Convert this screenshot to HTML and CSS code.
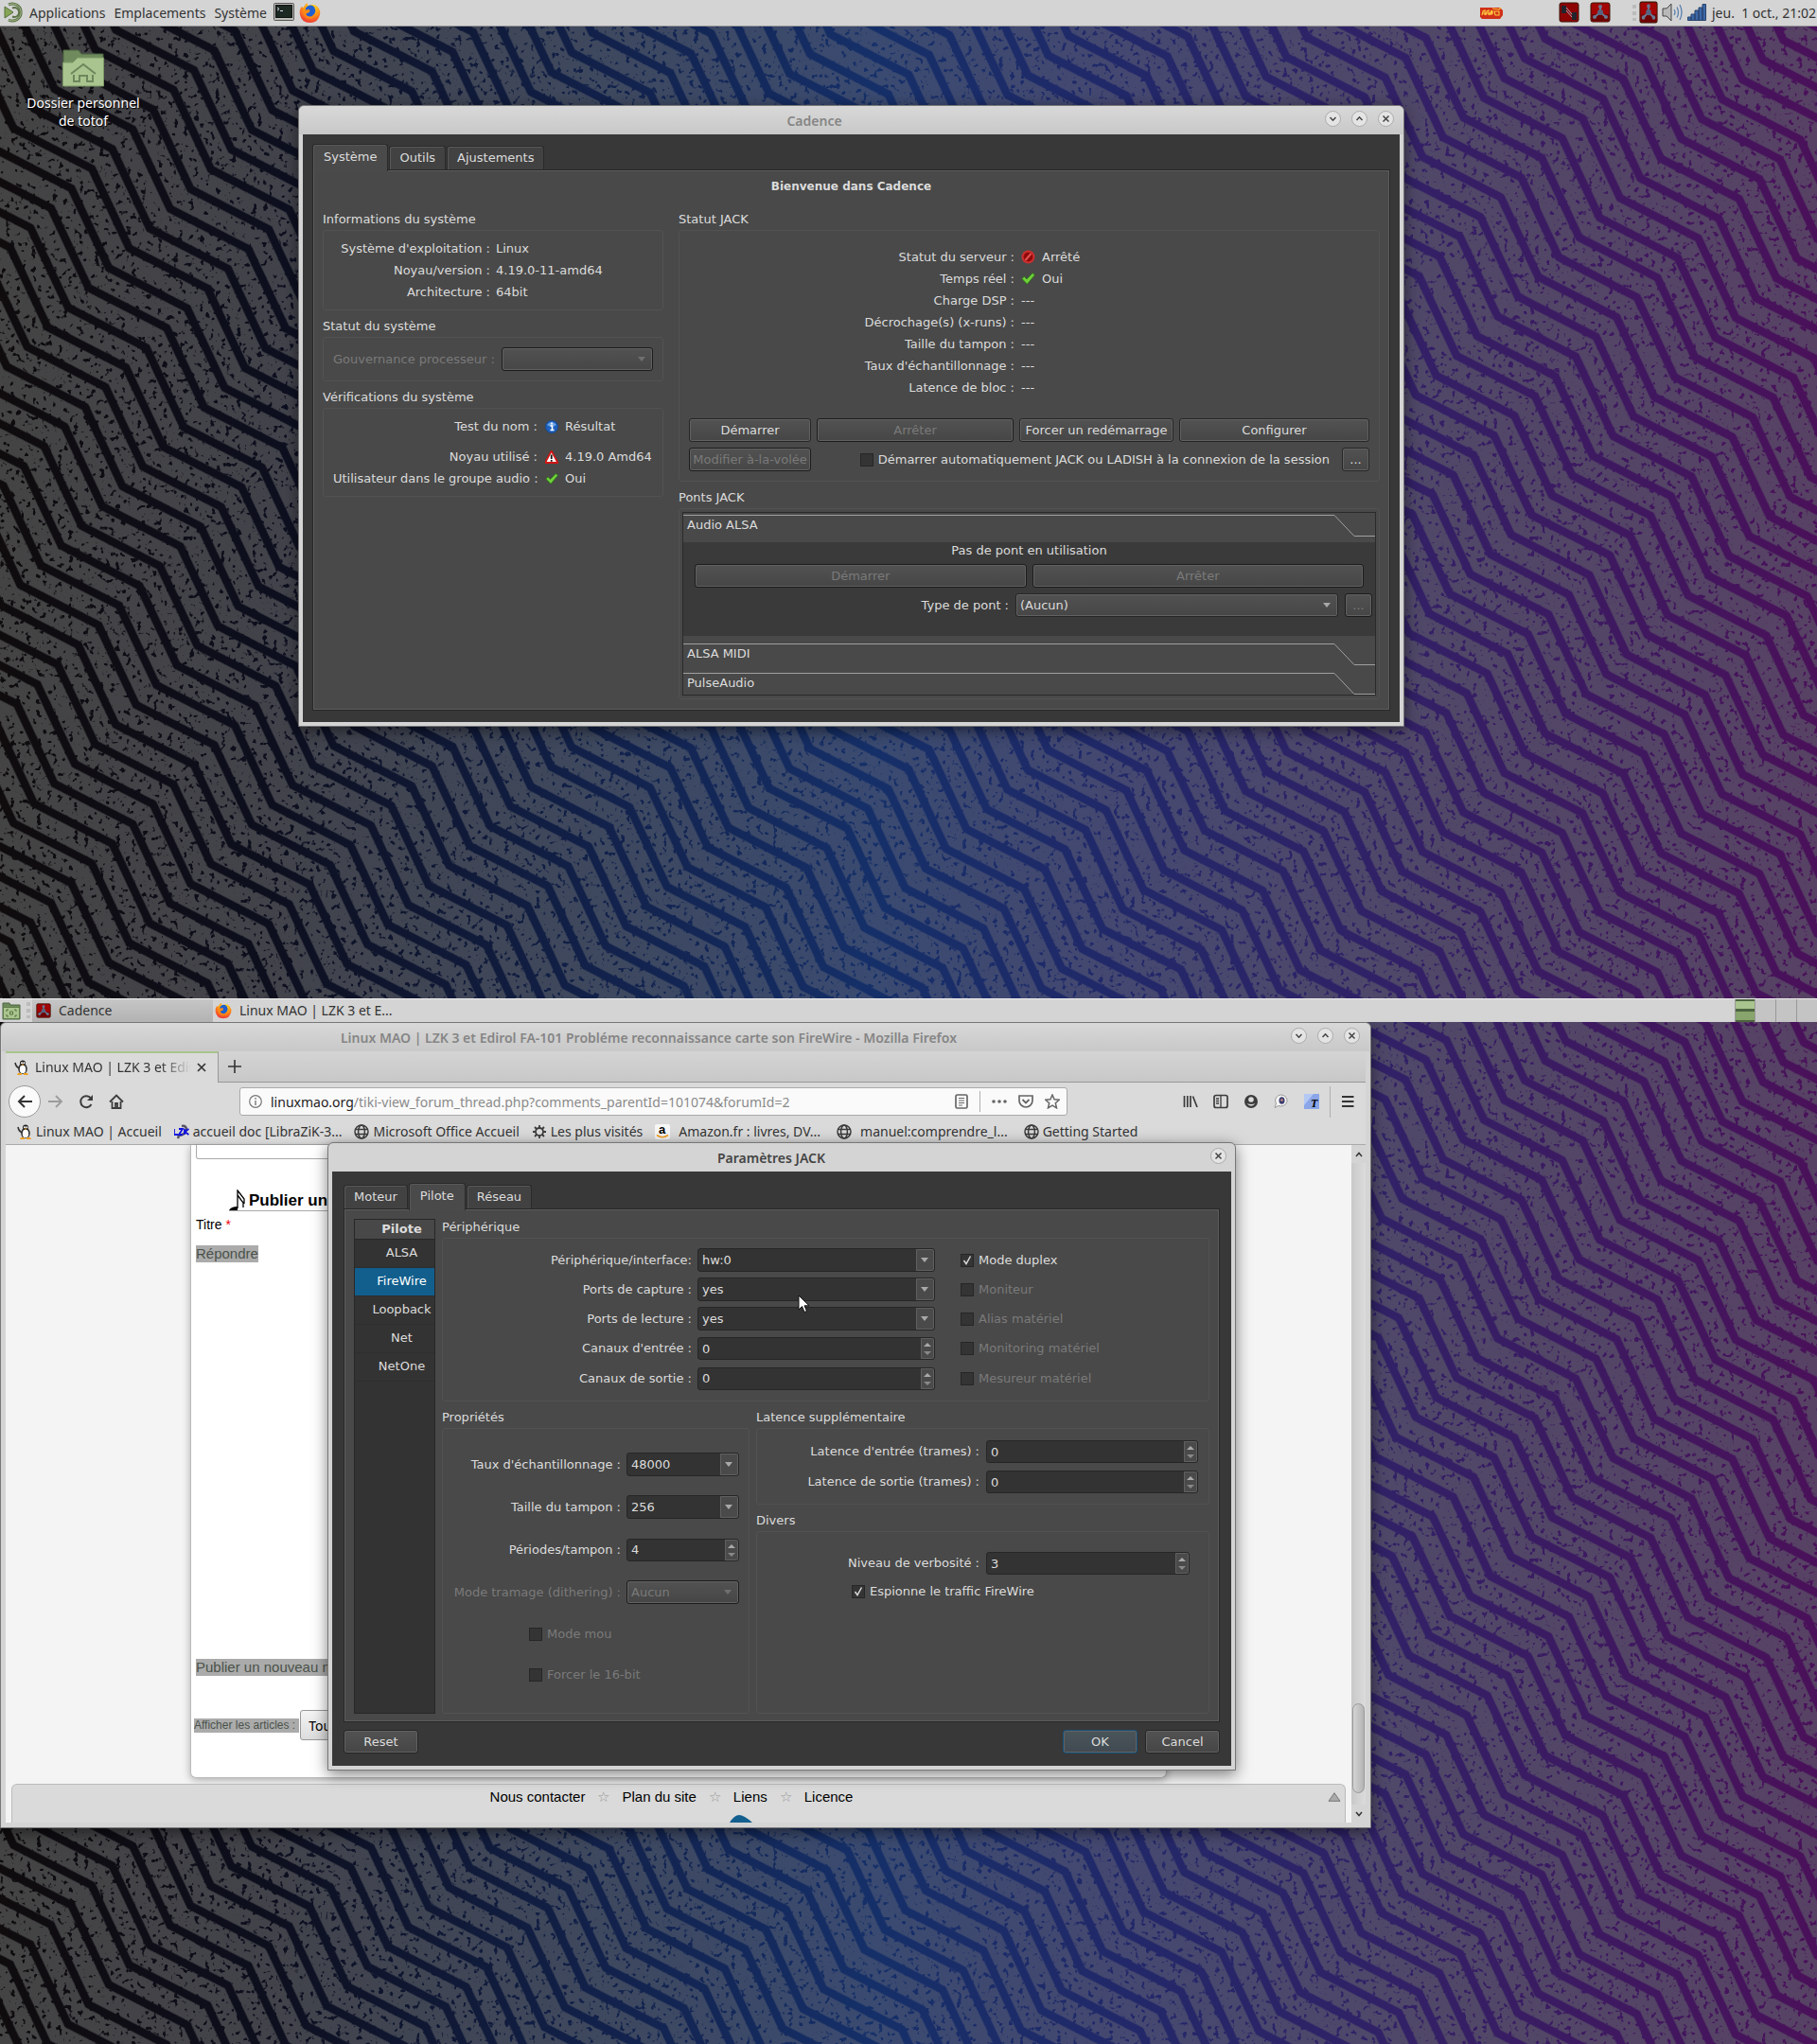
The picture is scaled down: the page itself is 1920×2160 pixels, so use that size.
FILE: index.html
```html
<!DOCTYPE html>
<html lang="fr">
<head>
<meta charset="utf-8">
<title>Bureau MATE</title>
<link rel="stylesheet" href="styles.css">
</head>
<body>
<svg class="defs" aria-hidden="true">
  <defs>
    <linearGradient id="ink" x1="0" y1="0" x2="1" y2="0">
      <stop offset="0" stop-color="#080406"/><stop offset=".15" stop-color="#060818"/><stop offset=".33" stop-color="#0c1c48"/>
      <stop offset=".48" stop-color="#102c68"/><stop offset=".62" stop-color="#1d2468"/><stop offset=".78" stop-color="#2f1b66"/><stop offset="1" stop-color="#480a58"/>
    </linearGradient>
    <linearGradient id="paint" x1="0" y1="0" x2="1" y2="0">
      <stop offset="0" stop-color="#444444"/><stop offset=".15" stop-color="#42434a"/><stop offset=".33" stop-color="#3e485e"/>
      <stop offset=".48" stop-color="#3a4a70"/><stop offset=".62" stop-color="#454870"/><stop offset=".78" stop-color="#504868"/><stop offset="1" stop-color="#574264"/>
    </linearGradient>
    <pattern id="zig" width="176" height="30" patternUnits="userSpaceOnUse" patternTransform="translate(18 10) rotate(46)">
      <g fill="none" stroke="#fff" stroke-width="20">
        <path d="M-88 -45 L0 -75 L88 -45 L176 -75 L264 -45"/><path d="M-88 -15 L0 -45 L88 -15 L176 -45 L264 -15"/>
        <path d="M-88 15 L0 -15 L88 15 L176 -15 L264 15"/><path d="M-88 45 L0 15 L88 45 L176 15 L264 45"/>
        <path d="M-88 75 L0 45 L88 75 L176 45 L264 75"/>
      </g>
    </pattern>
    <filter id="grit" x="0" y="0" width="1" height="1">
      <feTurbulence type="fractalNoise" baseFrequency=".18" numOctaves="2" seed="4" result="n"/>
      <feColorMatrix in="n" type="matrix" values="0 0 0 0 1  0 0 0 0 1  0 0 0 0 1  -10 0 0 0 7" result="m"/>
      <feComposite in="SourceGraphic" in2="m" operator="in"/>
    </filter>
    <mask id="stripes"><rect width="1920" height="1080" fill="url(#zig)" filter="url(#grit)"/></mask>
    <symbol id="wall" viewBox="0 0 1920 1080" preserveAspectRatio="xMidYMid slice">
      <rect width="1920" height="1080" fill="url(#ink)"/>
      <rect width="1920" height="1080" fill="url(#paint)" opacity=".12"/>
      <rect width="1920" height="1080" fill="url(#paint)" mask="url(#stripes)"/>
    </symbol>
    <radialGradient id="foxg" cx=".6" cy=".2" r=".9"><stop offset="0" stop-color="#ffe226"/><stop offset=".5" stop-color="#ff9116"/><stop offset="1" stop-color="#e8203c"/></radialGradient>
    <symbol id="fox" viewBox="0 0 24 24">
      <path d="M3 5 Q4 7 5 6 Q6 3 9 1 Q9 4 11 4 Q17 1 21 6 Q24 10 23 14 Q21 23 12 23 Q3 23 1 14 Q0 9 3 5Z" fill="url(#foxg)"/>
      <path d="M9 5 Q14 2 17 6 Q20 12 14 16 Q9 17 7 13 L12 11 L7 9 Q7 6 9 5Z" fill="#1f5fd0"/>
      <path d="M7 9 L11 8 L12 10 L10 12 Q7 12 8 15 Q12 19 17 14 Q15 20 9 18 Q4 15 5 10Z" fill="#ff8a14"/>
    </symbol>
    <symbol id="cad" viewBox="0 0 22 22">
      <rect x="1" y="1" width="20" height="20" rx="2" fill="#a30505" stroke="#3a1608"/><path d="M2 13 H20 V20 H2Z" fill="#6d0202"/>
      <path d="M11 11 V5 M11 11 L5 16 M11 11 L17 16" stroke="#6a7892" stroke-width="2"/><circle cx="11" cy="11" r="3" fill="#566480"/><circle cx="11" cy="5" r="2" fill="#6a7892"/><circle cx="5" cy="16" r="2" fill="#6a7892"/><circle cx="17" cy="16" r="2" fill="#6a7892"/>
    </symbol>
    <symbol id="tux" viewBox="0 0 16 16">
      <path d="M1 3 Q2 8 6 9" stroke="#333" stroke-width="1.600" fill="none"/><ellipse cx="9" cy="9.500" rx="4.800" ry="5.500" fill="#333"/><circle cx="9" cy="3.600" r="3" fill="#222"/><ellipse cx="9" cy="10" rx="3.200" ry="4.300" fill="#fff"/><circle cx="8" cy="3.200" r="1" fill="#fff"/><circle cx="10.300" cy="3.200" r="1" fill="#fff"/><path d="M7.500 4.600 H10.600 L9 6Z" fill="#f0a020"/><path d="M4 14 H8 V16 H3Z M10 14 H14 L15 16 H10Z" fill="#f0a020"/>
    </symbol>
    <symbol id="globe" viewBox="0 0 16 16"><g fill="none" stroke="#3c3c3c" stroke-width="1.5"><circle cx="8" cy="8" r="7"/><ellipse cx="8" cy="8" rx="3.4" ry="7"/><path d="M1.5 5.5 H14.5 M1.5 10.5 H14.5"/></g></symbol>
    <symbol id="down" viewBox="0 0 17 17"><circle cx="8.500" cy="8.500" r="8" fill="#e4e4e4" stroke="#aaa"/><path d="M5.500 7 L8.500 10.200 L11.500 7" fill="none" stroke="#444" stroke-width="1.500"/></symbol>
    <symbol id="up" viewBox="0 0 17 17"><circle cx="8.500" cy="8.500" r="8" fill="#e4e4e4" stroke="#aaa"/><path d="M5.500 10 L8.500 6.800 L11.500 10" fill="none" stroke="#444" stroke-width="1.500"/></symbol>
    <symbol id="shut" viewBox="0 0 17 17"><circle cx="8.500" cy="8.500" r="8" fill="#e4e4e4" stroke="#aaa"/><path d="M5.500 5.500 L11.500 11.500 M11.500 5.500 L5.500 11.500" fill="none" stroke="#444" stroke-width="1.500"/></symbol>
    <symbol id="ok" viewBox="0 0 14 14"><path d="M.8 7 L3.200 5 L5.500 7.500 L11.300 1.500 L13.400 3.500 L6 12.300Z" fill="#6fd03a" stroke="#2b7a12" stroke-width=".8"/></symbol>
    <symbol id="shoulder" viewBox="0 0 43 23"><path d="M0 .5 L21 22.500 H43" fill="none" stroke="#a0a0a0"/></symbol>
  </defs>
</svg>

<main class="desktop">
  <section class="monitor">
    <svg class="wall" aria-hidden="true"><use href="#wall"/></svg>
    <header class="panel panel-top">
      <svg width="22" height="22" viewBox="0 0 22 22" aria-hidden="true"><path d="M1 5 L10 11 L1 17Z" fill="#87a556" stroke="#55703a"/><path d="M5 3 A9 9 0 1 1 5 19" fill="none" stroke="#5b7146" stroke-width="3"/><path d="M5 3 A9 9 0 1 1 5 19" fill="none" stroke="#a8bd8c" stroke-width="1"/><path d="M9 6.500 A5 5 0 1 1 9 15.500" fill="none" stroke="#5b7146" stroke-width="2"/></svg>
      <nav class="menus"><a href="#">Applications</a><a href="#">Emplacements</a><a href="#">Système</a></nav>
      <svg width="22" height="20" viewBox="0 0 22 20" aria-hidden="true"><rect x=".5" y=".5" width="21" height="18" rx="1" fill="#bdbdb8" stroke="#555"/><rect x="2.500" y="2.500" width="17" height="13" fill="#1c2822" stroke="#111"/><path d="M4 5 L6 6.500 L4 8 M7 8.500 H10" stroke="#dde" fill="none"/></svg>
      <svg class="fox" width="23" height="23" aria-hidden="true"><use href="#fox"/></svg>
      <div class="tray">
        <svg class="t-amp" width="24" height="13" viewBox="0 0 24 13" aria-hidden="true"><path d="M0 1 H21 L24 4 V9 L21 13 H2 L0 11Z" fill="#d03018"/><path d="M2 9 L3 5 L5 4 V9 M6 9 L7 5 L9 4 V9 M10 9 L12 4 V9 M13 8 V4 M2 7 H13 M15 5 H20 V9 H16Z M13 2 L20 3 L22 1" stroke="#ffc840" stroke-width="1.100" fill="none"/></svg>
        <svg class="t-cat" width="22" height="22" viewBox="0 0 22 22" aria-hidden="true"><rect x="1" y="1" width="20" height="20" rx="2" fill="#8c0404" stroke="#3a1608"/><rect x="3" y="4" width="5" height="8" fill="#20242c"/><rect x="14" y="11" width="5" height="8" fill="#20242c"/><path d="M8 6 L14 13 M8 9 L14 16" stroke="#aab"/></svg>
        <svg class="t-one" width="22" height="22" aria-hidden="true"><use href="#cad"/></svg>
        <i class="grip"></i>
        <svg class="t-two" width="20" height="24" viewBox="0 0 22 22" preserveAspectRatio="none" aria-hidden="true"><use href="#cad" width="22" height="22"/></svg>
        <svg class="t-vol" width="22" height="20" viewBox="0 0 22 20" aria-hidden="true"><path d="M1 6 H5 L10 1 V19 L5 14 H1Z" fill="#b8b8b8" stroke="#444"/><path d="M13 7 Q15 10 13 13 M16 4.500 Q19 10 16 15.500 M19 2 Q23 10 19 18" fill="none" stroke="#5a80b0" stroke-width="1.300"/></svg>
        <svg class="t-net" width="20" height="18" viewBox="0 0 20 18" aria-hidden="true"><g fill="#3c68a8" stroke="#28436a"><path d="M.5 14 H4 V17.500 H.5Z M4 11 H8 V17.500 H4Z M8 7 H12 V17.500 H8Z M12 4 H16 V17.500 H12Z M16 .5 H19.500 V17.500 H16Z"/></g></svg>
        <time>jeu. &nbsp;1 oct., 21:02</time>
      </div>
    </header>

    <a class="launcher" href="#">
      <svg width="46" height="42" viewBox="0 0 46 42" aria-hidden="true"><path d="M2 2 H18 L21 6 H44 V20 H2Z" fill="#6f8a5c" stroke="#4d6440"/><path d="M1.500 15 H12 L17 10 H44.500 V40 H1.500Z" fill="#a9c48e" stroke="#7c9a66"/><path d="M10 27 L23 17 L36 27 M13 28 V35 H19 V29 H27 V35 H33 V28" fill="none" stroke="#6d875c" stroke-width="2"/></svg>
      <span>Dossier personnel de totof</span>
    </a>

    <section class="win cadence">
      <header class="titlebar"><h1>Cadence</h1>
        <span class="controls"><button aria-label="Réduire"><svg><use href="#down"/></svg></button><button aria-label="Agrandir"><svg><use href="#up"/></svg></button><button aria-label="Fermer"><svg><use href="#shut"/></svg></button></span>
      </header>
      <div class="client">
        <div class="tabs"><button class="tab on">Système</button><button class="tab">Outils</button><button class="tab">Ajustements</button></div>
        <div class="pane">
          <p class="welcome">Bienvenue dans Cadence</p>
          <div class="cad-cols">
            <div class="stack">
              <section><h2>Informations du système</h2>
                <dl class="box info"><dt>Système d'exploitation :</dt><dd>Linux</dd><dt>Noyau/version :</dt><dd>4.19.0-11-amd64</dd><dt>Architecture :</dt><dd>64bit</dd></dl>
              </section>
              <section><h2>Statut du système</h2>
                <div class="box gov"><label class="off" for="gov">Gouvernance processeur :</label><select id="gov" class="combo" disabled></select></div>
              </section>
              <section><h2>Vérifications du système</h2>
                <dl class="box checks">
                  <dt class="first">Test du nom :</dt><dd class="first"><svg width="14" height="14" viewBox="0 0 14 14"><circle cx="7" cy="7" r="6.500" fill="#1e62c0" stroke="#184a90"/><path d="M2 5 Q7 -1 12 5 Q7 8 2 5Z" fill="#6fa4e4"/><path d="M5.500 6 H7.500 V10.500 M5.500 10.500 H9.500 M7 2.500 V4.500" stroke="#fff" stroke-width="1.600" fill="none"/></svg>Résultat</dd>
                  <dt>Noyau utilisé :</dt><dd><svg width="14" height="14" viewBox="1 1 12.500 12.500"><path d="M7 1.600 L13 12.600 H1Z" fill="#fff" stroke="#d01414" stroke-width="1.600" stroke-linejoin="round"/><path d="M7 5 V9 M7 10 V11.400" stroke="#111" stroke-width="1.600"/></svg>4.19.0 Amd64</dd>
                  <dt>Utilisateur dans le groupe audio :</dt><dd><svg width="14" height="14"><use href="#ok"/></svg>Oui</dd>
                </dl>
              </section>
            </div>
            <div class="stack">
              <section><h2>Statut JACK</h2>
                <div class="box jack">
                  <dl class="stat">
                    <dt>Statut du serveur :</dt><dd><svg width="15" height="15" viewBox="0 0 15 15"><circle cx="7.500" cy="7.500" r="6" fill="#b01010" stroke="#c83030" stroke-width="2"/><circle cx="7.500" cy="7.500" r="4.500" fill="#8c0a0a"/><path d="M4.500 11 L10.500 4" stroke="#e05050" stroke-width="2"/></svg>Arrêté</dd>
                    <dt>Temps réel :</dt><dd><svg width="15" height="15"><use href="#ok"/></svg>Oui</dd>
                    <dt>Charge DSP :</dt><dd>---</dd><dt>Décrochage(s) (x-runs) :</dt><dd>---</dd><dt>Taille du tampon :</dt><dd>---</dd><dt>Taux d'échantillonnage :</dt><dd>---</dd><dt>Latence de bloc :</dt><dd>---</dd>
                  </dl>
                  <div class="actions">
                    <button class="btn">Démarrer</button><button class="btn" disabled>Arrêter</button><button class="btn">Forcer un redémarrage</button><button class="btn">Configurer</button>
                    <button class="btn" disabled>Modifier à-la-volée</button>
                    <div class="auto"><label><input type="checkbox">Démarrer automatiquement JACK ou LADISH à la connexion de la session</label><button class="btn dots">...</button></div>
                  </div>
                </div>
              </section>
              <section><h2>Ponts JACK</h2>
                <div class="box bridges"><div class="toolbox">
                  <h3 class="fold fold-first"><span>Audio ALSA</span><svg width="43" height="23"><use href="#shoulder"/></svg></h3>
                  <div class="bridge">
                    <p>Pas de pont en utilisation</p>
                    <div class="pair"><button class="btn" disabled>Démarrer</button><button class="btn" disabled>Arrêter</button></div>
                    <div class="type"><label for="pont">Type de pont :</label><select id="pont" class="combo"><option>(Aucun)</option></select><button class="btn dots" disabled>...</button></div>
                  </div>
                  <h3 class="fold"><span>ALSA MIDI</span><svg width="43" height="23"><use href="#shoulder"/></svg></h3>
                  <h3 class="fold"><span>PulseAudio</span><svg width="43" height="23"><use href="#shoulder"/></svg></h3>
                </div></div>
              </section>
            </div>
          </div>
        </div>
      </div>
    </section>

    <footer class="panel panel-bottom">
      <svg class="show" width="20" height="20" viewBox="0 0 20 20" aria-hidden="true"><path d="M1 2 H8 L9 4 H19 V19 H1Z" fill="#6f8a5c" stroke="#4d6440"/><rect x="1.500" y="6.500" width="17" height="12" fill="#a9c48e" stroke="#5f7d4a"/><path d="M5 11 V9 H7 M13 9 H15 V11 M15 14 V16 H13 M7 16 H5 V14 M8.500 11 H11.500 V14 H8.500Z" fill="none" stroke="#56713f"/></svg>
      <i class="grip"></i>
      <button class="task active"><svg width="16" height="16"><use href="#cad"/></svg>Cadence</button>
      <button class="task"><svg width="18" height="18"><use href="#fox"/></svg>Linux MAO | LZK 3 et E...</button>
      <div class="pager"><i class="cur"></i><i></i><i></i><i></i></div>
    </footer>
  </section>

  <section class="monitor">
    <svg class="wall" aria-hidden="true"><use href="#wall"/></svg>
    <section class="win firefox">
      <header class="titlebar"><h1>Linux MAO | LZK 3 et Edirol FA-101 Probléme reconnaissance carte son FireWire - Mozilla Firefox</h1>
        <span class="controls"><button aria-label="Réduire"><svg><use href="#down"/></svg></button><button aria-label="Agrandir"><svg><use href="#up"/></svg></button><button aria-label="Fermer"><svg><use href="#shut"/></svg></button></span>
      </header>
      <div class="ff">
        <div class="ff-tabs">
          <div class="ff-tab"><svg width="16" height="16"><use href="#tux"/></svg><span>Linux MAO | LZK 3 et Edirol</span><button aria-label="Fermer l'onglet"><svg width="10" height="10" viewBox="0 0 10 10"><path d="M1 1 L9 9 M9 1 L1 9" stroke="#333" stroke-width="1.700"/></svg></button></div>
          <button class="plus" aria-label="Nouvel onglet"><svg width="14" height="14" viewBox="0 0 14 14"><path d="M7 0 V14 M0 7 H14" stroke="#333" stroke-width="1.600"/></svg></button>
        </div>
        <div class="ff-bar">
          <button class="back" aria-label="Précédent"><svg width="16" height="16" viewBox="0 0 16 16"><path d="M16 8 H2 M8 2 L2 8 L8 14" fill="none" stroke="#333" stroke-width="2"/></svg></button>
          <button aria-label="Suivant"><svg width="16" height="16" viewBox="0 0 16 16"><path d="M0 8 H14 M8 2 L14 8 L8 14" fill="none" stroke="#9c9c9c" stroke-width="1.800"/></svg></button>
          <button aria-label="Actualiser"><svg width="16" height="16" viewBox="0 0 16 16"><path d="M13.500 11 A6 6 0 1 1 13 4.500" fill="none" stroke="#3c3c3c" stroke-width="2"/><path d="M15 1 V7 H9Z" fill="#3c3c3c"/></svg></button>
          <button aria-label="Accueil"><svg width="16" height="16" viewBox="0 0 16 16"><path d="M1 8.500 L8 1.500 L15 8.500 M3.500 8 V15 H12.500 V8 M7 15 V10 H9 V15" fill="none" stroke="#3c3c3c" stroke-width="1.800"/></svg></button>
          <div class="url">
            <svg width="14" height="14" viewBox="0 0 14 14"><circle cx="7" cy="7" r="6.300" fill="none" stroke="#777" stroke-width="1.200"/><path d="M7 6 V11 M7 3 V4.800" stroke="#777" stroke-width="1.400"/></svg>
            <span class="addr">linuxmao.org<i>/tiki-view_forum_thread.php?comments_parentId=101074&amp;forumId=2</i></span>
            <svg width="14" height="16" viewBox="0 0 14 16"><rect x="1" y="1" width="12" height="14" rx="1.500" fill="none" stroke="#666" stroke-width="1.700"/><path d="M4 4.500 H10 M4 7 H10 M4 9.500 H10 M4 12 H8" stroke="#666"/></svg>
            <i class="sep"></i>
            <svg width="16" height="16" viewBox="0 0 16 16"><g fill="#666"><circle cx="2" cy="8" r="1.800"/><circle cx="8" cy="8" r="1.800"/><circle cx="14" cy="8" r="1.800"/></g></svg>
            <svg width="16" height="16" viewBox="0 0 16 16"><path d="M1 2 H15 V7 A7 7 0 0 1 1 7Z" fill="none" stroke="#666" stroke-width="1.700"/><path d="M4.500 6 L8 9.500 L11.500 6" fill="none" stroke="#666" stroke-width="1.800"/></svg>
            <svg width="16" height="16" viewBox="0 0 16 16"><path d="M8 1 L10.100 5.800 L15.200 6.300 L11.300 9.700 L12.500 14.800 L8 12.100 L3.500 14.800 L4.700 9.700 L.8 6.300 L5.900 5.800Z" fill="none" stroke="#666" stroke-width="1.500"/></svg>
          </div>
          <div class="ff-tools">
            <svg width="16" height="16" viewBox="0 0 16 16"><path d="M1.500 2 V14 M4.800 2 V14 M8 2 V14 M10.500 2.500 L15 14" stroke="#3c3c3c" stroke-width="1.700"/></svg>
            <svg width="16" height="16" viewBox="0 0 16 16"><rect x="1" y="1.500" width="14" height="13" rx="2" fill="none" stroke="#3c3c3c" stroke-width="1.700"/><path d="M8 2 V14 M3 5 H6 M3 7.500 H6 M3 10 H6" stroke="#3c3c3c" stroke-width="1.300"/></svg>
            <svg width="16" height="16" viewBox="0 0 16 16"><circle cx="8" cy="8" r="7" fill="#3c3c3c"/><circle cx="8" cy="6" r="2.800" fill="#ddd"/><path d="M3.500 10 Q8 15.500 12.500 10 Q8 12 3.500 10Z" fill="#ddd"/></svg>
            <svg width="16" height="16" viewBox="0 0 16 16"><path d="M8 1 A6.500 6 0 1 1 5 12.500 L1 14.500 L2.500 10 A6.500 6 0 0 1 8 1Z" fill="#f4f4f4" stroke="#999"/><ellipse cx="8.500" cy="7" rx="3" ry="3.800" fill="#3c3c70"/><circle cx="8.500" cy="6.500" r="1.300" fill="#c8907c"/></svg>
            <svg width="16" height="16" viewBox="0 0 16 16"><rect width="16" height="16" fill="#8aa6e8"/><path d="M0 0 H10 L0 12Z" fill="#b4c8f4"/><text x="7" y="14" font-family="Liberation Serif, serif" font-size="12" font-weight="700" font-style="italic">T</text></svg>
            <i class="sep"></i>
            <svg width="13" height="16" viewBox="0 0 13 16"><path d="M0 3 H12.500 M0 8 H12.500 M0 13 H12.500" stroke="#333" stroke-width="2"/></svg>
          </div>
        </div>
        <nav class="marks">
          <a href="#"><svg><use href="#tux"/></svg>Linux MAO | Accueil</a>
          <a href="#"><svg viewBox="0 0 16 16"><path d="M8 2 Q13 1 13 6 Q12 11 5 12 L4 15" fill="none" stroke="#556" stroke-width="2.500"/><path d="M0 5 V11 H4 M5 5 H9 L5 11 H9 M11 5 V11 M15.500 5 L11 8 L15.500 11" fill="none" stroke="#1010e0" stroke-width="1.800"/></svg>accueil doc [LibraZiK-3...</a>
          <a href="#"><svg><use href="#globe"/></svg>Microsoft Office Accueil</a>
          <a href="#"><svg viewBox="0 0 16 16"><circle cx="8" cy="8" r="4" fill="none" stroke="#3c3c3c" stroke-width="1.800"/><path d="M8 1 V3.500 M8 12.500 V15 M1 8 H3.500 M12.500 8 H15 M3 3 L5 5 M11 11 L13 13 M13 3 L11 5 M5 11 L3 13" stroke="#3c3c3c" stroke-width="1.800"/></svg>Les plus visités</a>
          <a class="wide" href="#"><svg viewBox="0 0 16 16"><rect width="16" height="16" rx="2" fill="#f6f6f6"/><text x="4" y="10" font-family="Liberation Sans, sans-serif" font-size="13" font-weight="700">a</text><path d="M2 11.500 Q8 16 14 11.500" fill="none" stroke="#f0a020" stroke-width="1.600"/></svg>Amazon.fr : livres, DV...</a>
          <a class="wide" href="#"><svg><use href="#globe"/></svg>manuel:comprendre_l...</a>
          <a href="#"><svg><use href="#globe"/></svg>Getting Started</a>
        </nav>
        <div class="view">
          <div class="site">
            <article class="card">
              <div class="editor"></div>
              <h2><svg width="18" height="22" viewBox="0 0 18 22" aria-hidden="true"><path d="M9 20 V1 L16 10 V15 M9 6 L15 14 V19" fill="none" stroke="#000" stroke-width="1.300"/><path d="M0 22 Q2 18 9 18 V22Z"/></svg>Publier un nouveau message</h2>
              <p class="field">Titre <b>*</b></p>
              <p><mark>Répondre</mark></p>
              <p class="post"><mark>Publier un nouveau message</mark></p>
              <p class="filter"><mark><label for="art">Afficher les articles :</label></mark><select id="art"><option>Tous les articles</option></select></p>
            </article>
            <footer class="links"><span></span>
              <nav><a href="#">Nous contacter</a><i>☆</i><a href="#">Plan du site</a><i>☆</i><a href="#">Liens</a><i>☆</i><a href="#">Licence</a></nav>
              <svg width="14" height="10" viewBox="0 0 14 10" aria-hidden="true"><path d="M7 .7 L13 9.300 H1Z" fill="#aaa" stroke="#777"/></svg>
              <svg class="blob" width="24" height="8" viewBox="0 0 24 8" aria-hidden="true"><path d="M0 8 Q5 0 10 0 Q15 0 24 8Z" fill="#135f8f"/></svg>
            </footer>
          </div>
          <div class="scroll"><i class="s-btn"><svg width="8" height="6" viewBox="0 0 8 6"><path d="M1 5 L4 1.500 L7 5" fill="none" stroke="#333" stroke-width="1.500"/></svg></i><i class="thumb"></i><i class="s-btn"><svg width="8" height="6" viewBox="0 0 8 6"><path d="M1 1 L4 4.500 L7 1" fill="none" stroke="#333" stroke-width="1.500"/></svg></i></div>
        </div>
      </div>
    </section>

    <section class="win params" role="dialog" aria-label="Paramètres JACK">
      <header class="titlebar"><h1>Paramètres JACK</h1><span class="controls"><button aria-label="Fermer"><svg><use href="#shut"/></svg></button></span></header>
      <div class="client">
        <div class="tabs"><button class="tab">Moteur</button><button class="tab on">Pilote</button><button class="tab">Réseau</button></div>
        <div class="pane par-cols">
          <div class="drivers"><table><thead><tr><th>Pilote</th></tr></thead><tbody><tr><td>ALSA</td></tr><tr class="sel"><td>FireWire</td></tr><tr><td>Loopback</td></tr><tr><td>Net</td></tr><tr><td>NetOne</td></tr></tbody></table></div>
          <div class="stack">
            <section><h2>Périphérique</h2>
              <div class="box device">
                <label for="f1">Périphérique/interface:</label><select id="f1" class="edit"><option>hw:0</option></select><label class="tick"><input type="checkbox" checked>Mode duplex</label>
                <label for="f2">Ports de capture :</label><select id="f2" class="edit"><option>yes</option></select><label class="tick off"><input type="checkbox" disabled>Moniteur</label>
                <label for="f3">Ports de lecture :</label><select id="f3" class="edit"><option>yes</option></select><label class="tick off"><input type="checkbox" disabled>Alias matériel</label>
                <label for="f4">Canaux d'entrée :</label><input id="f4" class="spin" type="number" value="0"><label class="tick off"><input type="checkbox" disabled>Monitoring matériel</label>
                <label for="f5">Canaux de sortie :</label><input id="f5" class="spin" type="number" value="0"><label class="tick off"><input type="checkbox" disabled>Mesureur matériel</label>
              </div>
            </section>
            <div class="lower">
              <section class="grow"><h2>Propriétés</h2>
                <div class="box props">
                  <label for="p1">Taux d'échantillonnage :</label><select id="p1" class="edit"><option>48000</option></select>
                  <label for="p2">Taille du tampon :</label><select id="p2" class="edit"><option>256</option></select>
                  <label for="p3">Périodes/tampon :</label><input id="p3" class="spin" type="number" value="4">
                  <label class="off" for="p4">Mode tramage (dithering) :</label><select id="p4" class="combo" disabled><option>Aucun</option></select>
                  <label class="tick off"><input type="checkbox" disabled>Mode mou</label>
                  <label class="tick off"><input type="checkbox" disabled>Forcer le 16-bit</label>
                </div>
              </section>
              <div class="stack">
                <section><h2>Latence supplémentaire</h2>
                  <div class="box lat"><label for="l1">Latence d'entrée (trames) :</label><input id="l1" class="spin" type="number" value="0"><label for="l2">Latence de sortie (trames) :</label><input id="l2" class="spin" type="number" value="0"></div>
                </section>
                <section class="grow"><h2>Divers</h2>
                  <div class="box misc"><label for="m1">Niveau de verbosité :</label><input id="m1" class="spin" type="number" value="3"><label class="tick"><input type="checkbox" checked>Espionne le traffic FireWire</label></div>
                </section>
              </div>
            </div>
          </div>
        </div>
        <div class="foot"><button class="btn">Reset</button><span><button class="btn default">OK</button><button class="btn">Cancel</button></span></div>
      </div>
      <svg class="cursor" width="13" height="20" viewBox="0 0 13 20" aria-hidden="true"><path d="M1 1 V16 L4.500 12.500 L7 18.500 L9.500 17.500 L7 11.800 H12Z" fill="#fff" stroke="#111"/></svg>
    </section>
  </section>
</main>
</body>
</html>
```
FILE: styles.css
```css
* { box-sizing: border-box; }
body { margin: 0; font: 14px/19px "Noto Sans", sans-serif; color: #333; }
h1, h2, h3, p, dl, dd { margin: 0; font-size: inherit; font-weight: inherit; }
button, input, select { font: inherit; color: inherit; margin: 0; padding: 0; border: 0; background: none; }
button { white-space: nowrap; }
a { color: inherit; text-decoration: none; }
i { font-style: normal; }
svg { flex: none; }
.defs { position: absolute; width: 0; height: 0; }

/* desktop */
.monitor { position: relative; height: 50vh; min-height: 900px; overflow: hidden; display: flex; flex-direction: column; background: #101830; }
.wall { position: absolute; inset: 0; width: 100%; height: 100%; }
.panel { position: relative; display: flex; align-items: center; background: #d4d4d4; }
.panel-top { height: 28px; padding: 0 1px 1px 4px; border-bottom: 1px solid #999; }
.menus { display: flex; gap: 9px; margin: 0 7px 0 5px; }
.fox { margin-left: 5px; }
.tray { margin-left: auto; display: flex; align-items: center; }
.t-amp { margin-right: 59px; }
.t-cat { margin-right: 11px; }
.t-one { margin-right: 23px; }
.t-vol { margin: 0 5px 0 4px; }
.t-net { margin-right: 6px; }
.grip { width: 4px; height: 17px; margin-right: 3px; background: repeating-linear-gradient(#bbb 0 4px, transparent 4px 7px); }
.launcher { position: relative; width: 130px; margin: 23px 0 0 23px; display: flex; flex-direction: column; align-items: center; gap: 6px; text-align: center; color: #fff; text-shadow: 1px 1px 1px #000; }
.panel-bottom { margin-top: auto; height: 25px; padding: 0 0 1px 2px; border-top: 1px solid #eee; }
.show { margin-right: 6px; }
.task { display: flex; align-items: center; gap: 8px; height: 24px; width: 191px; padding-left: 4px; text-align: left; }
.task + .task { padding-left: 2px; }
.panel-bottom .grip { margin-right: 2px; }
.task.active { background: linear-gradient(#c6c6c6, #b2b2b2); }
.pager { margin-left: auto; display: flex; gap: 1px; height: 24px; background: #999; padding-left: 1px; }
.pager i { width: 21px; background: #c4c4c4; }
.pager .cur { width: 20px; background: linear-gradient(#4d6440 0 2px, #a9c48e 2px 10px, #4d6440 10px 13px, #87a56c 13px 22px, #4d6440 22px); }

/* window frames */
.win { position: absolute; display: flex; flex-direction: column; padding: 0 4px 4px; border: 1px solid #777; border-radius: 6px 6px 0 0; background: #d4d4d4; box-shadow: 0 4px 16px rgba(0, 0, 0, .5); }
.titlebar { display: flex; align-items: center; height: 30px; }
.titlebar h1 { flex: 1; text-align: center; font-weight: 600; color: #858585; white-space: nowrap; }
.controls { display: flex; gap: 11px; padding: 0 5px 3px 0; }
.controls button, .controls svg { display: block; width: 17px; height: 17px; }
.cadence { left: 315px; top: 111px; width: 1169px; }
.cadence .titlebar, .firefox .titlebar { background: linear-gradient(#d8d8d8, #c8c8c8); margin: 0 -4px; border-radius: 6px 6px 0 0; padding: 0 5px; }
.params { left: 346px; top: 127px; width: 960px; }
.params .titlebar h1 { color: #444; }

/* dark Qt widgets */
.client { background: #383838; color: #dcdcdc; font: 13px/18px "DejaVu Sans", sans-serif; padding: 10px 10px 12px; }
.params .client { padding: 12px 12px 13px; }
.tabs { display: flex; align-items: flex-end; gap: 1px; height: 27px; }
.tab { height: 25px; padding: 0 10px; border: 1px solid #2a2a2a; border-bottom: 0; border-radius: 3px 3px 0 0; background: #424242; box-shadow: inset 1px 1px #585858; }
.tab.on { position: relative; height: 29px; margin-bottom: -2px; padding: 0 11px 2px; background: #4a4a4a; z-index: 1; }
.pane { border: 1px solid #282828; box-shadow: inset 0 0 0 1px #5c5c5c; background: #494949; padding: 8px 10px 11px; }
.welcome { text-align: center; font-size: 12px; font-weight: 700; margin-bottom: 17px; }
.cad-cols { display: grid; grid-template-columns: 360px 1fr; gap: 16px; }
.stack { display: flex; flex-direction: column; gap: 8px; min-width: 0; }
.client h2 { height: 18px; margin-bottom: 2px; }
.box { border: 1px solid #525252; border-radius: 3px; padding: 10px; }
dl { display: grid; grid-auto-rows: 23px; align-items: center; }
dt { text-align: right; white-space: nowrap; }
dd { display: flex; align-items: center; gap: 7px; white-space: nowrap; }
.info { grid-template-columns: 166px 1fr; column-gap: 6px; padding: 7px 10px; }
.gov { display: flex; align-items: center; gap: 7px; white-space: nowrap; }
.gov .combo { flex: 1; min-width: 0; }
.checks { grid-template-columns: 216px 1fr; column-gap: 8px; grid-auto-rows: auto; line-height: 23px; padding: 7px 10px; }
.checks .first { margin-bottom: 9px; }
.off { color: #7a7a7a; }
.btn { height: 25px; border: 1px solid #262626; border-radius: 3px; background: linear-gradient(#525252, #464646); box-shadow: inset 0 0 0 1px #616161; color: #dcdcdc; text-align: center; }
.btn:disabled { color: #7a7a7a; border-color: #1c1c1c; }
.btn.dots { width: 29px; }
.btn.default { border-color: #14507a; background: linear-gradient(#4a555a, #414a52); }
.combo { appearance: none; height: 25px; padding: 0 8px 0 4px; border: 1px solid #262626; border-radius: 3px; box-shadow: inset 0 0 0 1px #616161; background: url("data:image/svg+xml,%3Csvg xmlns='http://www.w3.org/2000/svg' width='9' height='6'%3E%3Cpath d='M0 0H8L4 5Z' fill='%23a8a8a8'/%3E%3C/svg%3E") no-repeat right 6px center, linear-gradient(#525252, #464646); }
.combo:disabled { color: #7a7a7a; opacity: 1; border-color: #1c1c1c; background-image: url("data:image/svg+xml,%3Csvg xmlns='http://www.w3.org/2000/svg' width='9' height='6'%3E%3Cpath d='M0 0H8L4 5Z' fill='%23707070'/%3E%3C/svg%3E"), linear-gradient(#525252, #464646); }
.edit { appearance: none; height: 25px; padding: 0 4px; border: 1px solid #262626; border-radius: 3px; background: url("data:image/svg+xml,%3Csvg xmlns='http://www.w3.org/2000/svg' width='19' height='23'%3E%3Crect width='19' height='23' fill='%234a4a4a'/%3E%3Cpath d='M.5 .5H18.500V22.500H.5Z' fill='none' stroke='%23606060'/%3E%3Cpath d='M5 9H13L9 14Z' fill='%23a8a8a8'/%3E%3C/svg%3E") no-repeat right center #333; }
.spin { appearance: textfield; height: 24px; width: 100%; padding: 0 4px; border: 1px solid #262626; border-radius: 3px; background: url("data:image/svg+xml,%3Csvg xmlns='http://www.w3.org/2000/svg' width='14' height='22'%3E%3Crect width='14' height='22' fill='%234a4a4a'/%3E%3Cpath d='M.5 .5H13.500V21.500H.5Z' fill='none' stroke='%23606060'/%3E%3Cpath d='M3 9H11L7 5Z' fill='%23a8a8a8'/%3E%3Cpath d='M3 14H11L7 18Z' fill='%23888'/%3E%3C/svg%3E") no-repeat right center #333; }
.spin::-webkit-inner-spin-button { appearance: none; }
input[type="checkbox"] { appearance: none; flex: none; width: 14px; height: 14px; border: 1px solid #262626; background: #343434; }
input[type="checkbox"]:checked { background: url("data:image/svg+xml,%3Csvg xmlns='http://www.w3.org/2000/svg' width='12' height='12'%3E%3Cpath d='M2.500 6L5 9.500L9.500 1.500' fill='none' stroke='%23d8d8d8' stroke-width='1.500'/%3E%3C/svg%3E") #343434; }
.tick, .auto label { display: flex; align-items: center; gap: 5px; white-space: nowrap; }

.stat { grid-template-columns: 344px 1fr; column-gap: 7px; margin: 6px 0 21px; }
.actions { display: grid; grid-template-columns: 129px 208px 163px 1fr; gap: 6px; }
.auto { grid-column: span 3; display: flex; justify-content: flex-end; gap: 13px; }
.bridges { padding: 3px; }
.toolbox { border: 1px solid #2a2a2a; }
.fold { display: flex; padding-top: 8px; height: 31px; }
.fold-first { padding-top: 2px; }
.fold span { flex: 1; height: 23px; border-top: 1px solid #a0a0a0; line-height: 20px; padding-left: 4px; }
.bridge { height: 99px; background: #3a3a3a; }
.bridge p { text-align: center; margin-bottom: 5px; }
.pair { display: grid; grid-template-columns: 1fr 1fr; gap: 6px; margin: 0 12px 6px; }
.type { display: flex; align-items: center; justify-content: flex-end; gap: 7px; padding-right: 3px; }
.type .combo { width: 341px; }

.par-cols { display: flex; gap: 7px; padding: 10px 10px 8px; min-height: 543px; }
.par-cols > .stack { flex: 1; }
.drivers { width: 86px; background: #333; border: 1px solid #272727; }
.drivers table { width: 100%; border-collapse: collapse; }
.drivers th { height: 20px; padding: 0 0 0 15px; font-weight: 700; background: #484848; border-bottom: 1px solid #272727; }
.drivers td { height: 30px; padding: 0 0 0 15px; text-align: center; border-bottom: 1px solid #2e2e2e; }
.drivers .sel td { background: #125f8e; color: #fff; }
.params .box > label:not(.tick) { text-align: right; white-space: nowrap; }
.device { display: grid; grid-template-columns: 253px 251px 1fr; grid-template-rows: 25px 25px 25px 26px 25px; gap: 6px; align-items: center; padding-bottom: 11px; }
.device .tick { padding-left: 21px; }
.lower { flex: 1; display: grid; grid-template-columns: 325px 1fr; gap: 7px; }
.grow { display: flex; flex-direction: column; flex: 1; }
.grow .box { flex: 1; }
.props { display: grid; grid-template-columns: 178px 119px; column-gap: 6px; grid-template-rows: repeat(4, 45px) 43px 43px; align-items: center; padding-top: 15px; }
.props .tick { grid-column: 1 / -1; padding-left: 81px; }
.lat, .misc { display: grid; grid-template-columns: 225px 224px; grid-auto-rows: 24px; gap: 8px 7px; align-items: center; padding: 12px 10px 11px; }
.misc { grid-template-columns: 225px 215px; row-gap: 6px; padding-top: 21px; align-content: start; }
.misc .tick { grid-column: 1 / -1; padding-left: 90px; }
.foot { display: flex; justify-content: space-between; margin-top: 8px; }
.foot span { display: flex; gap: 8px; }
.foot .btn { width: 79px; }
.cursor { position: absolute; left: 496px; top: 160px; }

/* Firefox */
.firefox { left: 0; top: 0; width: 1449px; padding: 0 5px 5px; }
.ff { background: #dadada; }
.ff-tabs { display: flex; height: 33px; background: linear-gradient(#d4d4d4, #c8c8c8); border-bottom: 1px solid #999; }
.ff-tab { display: flex; align-items: center; width: 225px; height: 33px; padding: 0 12px 2px 9px; gap: 6px; background: #dadada; border-top: 2px solid #a9c48e; border-right: 1px solid #999; }
.ff-tab span { flex: 1; overflow: hidden; white-space: nowrap; mask-image: linear-gradient(90deg, #000 80%, transparent); }
.ff-tab button { line-height: 0; }
.plus { width: 34px; line-height: 0; }
.ff-bar { display: flex; align-items: center; height: 40px; padding: 0 12px 0 3px; }
.ff-bar button { width: 32px; height: 32px; display: grid; place-items: center; }
.ff-bar .back { width: 34px; height: 34px; border: 1px solid #999; border-radius: 50%; background: #fafafa; }
.url { flex: 1; display: flex; align-items: center; gap: 12px; height: 30px; margin: 0 122px 0 114px; padding: 0 7px 0 9px; border: 1px solid #aaa; border-radius: 3px; background: #fafafa; }
.addr { flex: 1; margin-left: -3px; color: #222; white-space: nowrap; }
.addr i { color: #8a8a8a; }
.sep { width: 1px; height: 22px; background: #b0b0b0; }
.ff-tools { display: flex; align-items: center; gap: 16px; }
.ff-tools .sep { height: 33px; margin: 0 -4px 0 -5px; }
.marks { display: flex; align-items: center; gap: 13px; height: 26px; padding: 0 0 2px 12px; border-bottom: 1px solid #aaa; white-space: nowrap; }
.marks a { display: flex; align-items: center; gap: 4px; }
.marks a.wide { gap: 9px; margin-right: 4px; }
.marks svg { width: 16px; height: 16px; }
.view { display: flex; background: #f4f4f4; font: 15px/18px "Liberation Sans", sans-serif; color: #000; }
.site { flex: 1; padding-left: 6px; }
.card { margin: 0 195px 0 189px; min-height: 669px; padding: 0 0 0 5px; background: #fff; border: 1px solid #bbb; border-top: 0; border-radius: 0 0 6px 6px; box-shadow: 0 2px 8px rgba(0, 0, 0, .3); }
.editor { height: 15px; margin-right: 5px; border: 1px solid #aaa; border-top: 0; border-radius: 0 0 3px 3px; }
.card h2 { display: flex; align-items: flex-end; gap: 3px; margin: 31px 5px 5px 35px; height: 24px; font-size: 17px; font-weight: 700; line-height: 20px; border-bottom: 1px solid #aaa; }
.field { margin-bottom: 13px; font-size: 14px; }
.field b { color: #e00; font-weight: 400; }
mark { background: #ababab; color: #4a524a; display: inline-block; }
.post { margin-top: 419px; }
.filter { display: flex; align-items: center; margin: 36px 0 0 -2px; font-size: 12px; line-height: 15px; }
.filter mark { padding-right: 4px; }
.filter select { appearance: none; height: 32px; width: 160px; margin-left: 1px; padding-left: 8px; border: 1px solid #999; border-radius: 3px; background: linear-gradient(#f4f4f4, #ddd); font: 14px "Noto Sans", sans-serif; }
.links { position: relative; display: flex; align-items: flex-start; justify-content: space-between; height: 41px; margin: 6px 6px 0 0; padding: 4px 4px 0 3px; background: #dadada; border: 1px solid #bbb; border-bottom: 0; border-radius: 6px 6px 0 0; }
.links nav { display: flex; gap: 13px; }
.links nav i { color: #999; }
.links > svg { margin-top: 4px; }
.links .blob { position: absolute; left: 758px; bottom: 0; }
.scroll { width: 15px; display: flex; flex-direction: column; align-items: center; background: linear-gradient(90deg, #c8c8c8, #dcdcdc); }
.s-btn { width: 15px; height: 19px; display: grid; place-items: center; background: #d4d4d4; }
.thumb { width: 13px; height: 95px; margin: auto 0 12px; border: 1px solid #999; border-radius: 7px; background: linear-gradient(90deg, #d4d4d4, #b4b4b4); }
```
